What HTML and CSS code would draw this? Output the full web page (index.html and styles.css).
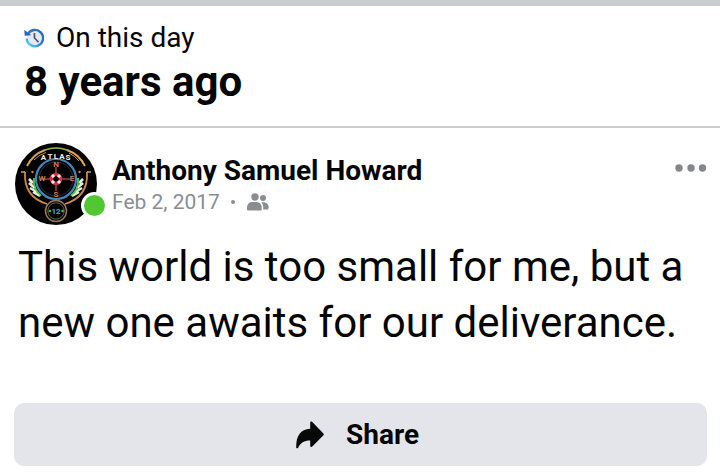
FILE: index.html
```html
<!DOCTYPE html>
<html lang="en">
<head>
<meta charset="utf-8">
<meta name="viewport" content="width=device-width, initial-scale=1">
<title>On this day</title>
<link rel="stylesheet" href="styles.css">
</head>
<body>
<main class="memory">
  <header class="memory-head">
    <p class="memory-label">
      <svg class="clock" viewBox="0 0 22 22" aria-hidden="true">
        <defs>
          <linearGradient id="ring" x1="1" y1="0" x2="0" y2="1">
            <stop offset="0" stop-color="#2b62b8"/>
            <stop offset=".5" stop-color="#2b7fcb"/>
            <stop offset="1" stop-color="#5fd6fa"/>
          </linearGradient>
        </defs>
        <circle cx="12" cy="11" r="9" fill="#e3e9f6"/>
        <path d="M4 7A9 9 0 1 1 3 11.500" fill="none" stroke="url(#ring)" stroke-width="2.600"/>
        <path d="M.3 2L.8 8.600L8 8Z" fill="#2468bd"/>
        <path d="M11.500 5.500V11L16 15.500" fill="none" stroke="#56585f" stroke-width="1.900"/>
      </svg>
      <span>On this day</span>
    </p>
    <h1 class="memory-title">8 years ago</h1>
  </header>
  <article class="post">
    <header class="post-head">
      <div class="avatar">
        <svg class="avatar-art" viewBox="0 0 82 82" role="img" aria-label="Atlas emblem">
          <circle cx="41" cy="41" r="41" fill="#020203"/>
          <g fill="none">
            <path d="M12 23A32 32 0 0 1 30 7" stroke="#d9a441" stroke-width="2"/>
            <path d="M30 7A32 32 0 0 1 52 7" stroke="#8fb85a" stroke-width="1.500"/>
            <path d="M52 7A32 32 0 0 1 70 23" stroke="#dfa650" stroke-width="2"/>
            <path d="M19 17A29 29 0 0 1 31 9.500M54 10A29 29 0 0 1 64 18" stroke="#b8963e"/>
            <path d="M6 29H10M72 29H76" stroke="#d7a463" stroke-width="1.500"/>
            <path d="M10 29C9 45 16 56 32 61M72 29C73 45 66 56 50 61" stroke="#c98a4c" stroke-width="1.800"/>
            <circle cx="41" cy="36" r="20" stroke="#4585b8" stroke-width="2.200"/>
            <circle cx="41" cy="36" r="17" stroke="#263e59" stroke-width=".8"/>
            <path d="M41 24V31M41 41V48M27 36H36M46 36H55" stroke="#a33c3e" stroke-width="1.600"/>
            <circle cx="41" cy="36" r="4.500" stroke="#cf3444" stroke-width="3.500"/>
            <path d="M37 32L39 34M45 32L43 34M37 40L39 38M45 40L43 38" stroke="#fbeeee" stroke-width="3"/>
            <circle cx="41" cy="68" r="10.500" stroke="#9a7c58" stroke-width="1.500"/>
            <circle cx="41" cy="68" r="8.200" stroke="#6c6250"/>
            <path d="M14 36L18 40M14 40L20 45M15 45L22 49M18 49L25 53" stroke="#e5f2df" stroke-width="2.500"/>
            <path d="M68 36L64 40M68 40L62 45M67 45L60 49M64 49L57 53" stroke="#e5f2df" stroke-width="2.500"/>
            <path d="M19 35V41L21 47L26 53" stroke="#58c842" stroke-width="1.800"/>
            <path d="M63 35V41L61 47L56 53" stroke="#58c842" stroke-width="1.800"/>
          </g>
          <circle cx="17.500" cy="29" r="1.200" fill="#d77c49"/>
          <circle cx="64.500" cy="29" r="1.200" fill="#d77c49"/>
          <circle cx="35" cy="68" r="1.300" fill="#4bb84a"/>
          <circle cx="47.500" cy="68" r="1.300" fill="#4bb84a"/>
          <g class="emblem-text" text-anchor="middle">
            <g fill="#f5f1e8">
              <text x="28.500" y="17">A</text>
              <text x="35" y="16">T</text>
              <text x="41" y="16">L</text>
              <text x="47" y="16">A</text>
              <text x="53" y="17">S</text>
            </g>
            <g fill="#cb7b4d">
              <text x="41" y="24">N</text>
              <text x="41" y="54">S</text>
              <text x="27" y="38">W</text>
              <text x="57" y="38">E</text>
            </g>
            <text x="41" y="71" fill="#4fa3e6">12</text>
          </g>
        </svg>
        <span class="online" title="Online"></span>
      </div>
      <div class="byline">
        <h2 class="author">Anthony Samuel Howard</h2>
        <p class="meta">
          <time datetime="2017-02-02">Feb 2, 2017</time>
          <span class="dot"></span>
          <svg class="friends" viewBox="0 0 22 18" role="img" aria-label="Friends">
            <g fill="#8a8d91">
              <circle cx="8" cy="4" r="3.700"/>
              <path d="M1 17.500C.3 17.500 0 17 0 16.200V14.500C0 11 2.500 9 5.500 9H9C12.500 9 14.700 11.200 14.700 14.500V16.200C14.700 17 14.300 17.500 13.600 17.500Z"/>
              <circle cx="16" cy="5" r="3"/>
              <path d="M14.300 9.200H16.500C19.500 9.200 21.700 11.400 21.700 14.200C21.700 15.800 21 16.500 19.500 16.500H16.200C16.500 13.400 16 11 14.300 9.200Z"/>
            </g>
          </svg>
        </p>
      </div>
      <button class="more" type="button" aria-label="More options">
        <svg class="more-dots" viewBox="0 0 32 8" aria-hidden="true">
          <g fill="#85878b"><circle cx="4" cy="4" r="3.700"/><circle cx="16" cy="4" r="3.700"/><circle cx="27.500" cy="4" r="3.700"/></g>
        </svg>
      </button>
    </header>
    <p class="post-text">This world is too small for me, but a new one awaits for our deliverance.</p>
    <button class="share" type="button">
      <svg class="share-arrow" viewBox="0 0 28 28" aria-hidden="true">
        <path d="M14.200 1.800C14.200.5 15.400.1 16.300 1L27.200 12.200C28 13 28 13.700 27.200 14.500L16.300 25.600C15.400 26.500 14.200 26 14.200 24.800V19.400C8 19.400 4.500 21.500 2.300 26.500C1.700 27.800.2 27.600.2 26.200C.1 15 4.500 8.300 14.200 7.800Z" fill="#080809"/>
      </svg>
      <span>Share</span>
    </button>
  </article>
</main>
</body>
</html>
```
FILE: styles.css
```css
* {
  box-sizing: border-box;
}

body {
  margin: 0;
  background: #fff;
  color: #050505;
  font-family: Roboto, "Liberation Sans", sans-serif;
}

h1, h2, p {
  margin: 0;
}

button {
  border: 0;
  font: inherit;
  color: inherit;
  cursor: pointer;
}

svg {
  display: block;
  flex: none;
}

.memory {
  border-top: 6px solid #c9ccd1;
}

.memory-head {
  padding: 16px 24px;
  border-bottom: 2px solid #c9cbce;
}

.memory-label {
  display: flex;
  align-items: center;
  gap: 12px;
  font-size: 28px;
  line-height: 32px;
}

.clock {
  width: 20px;
  height: 20px;
}

.memory-title {
  font-size: 42px;
  font-weight: 700;
  line-height: 56px;
}

.post {
  padding: 15px 13px 10px 14px;
}

.post-head {
  display: flex;
  align-items: flex-start;
}

.avatar {
  position: relative;
  flex: none;
  width: 84px;
}

.avatar-art {
  width: 82px;
  height: 82px;
  margin-left: 1px;
}

.emblem-text {
  font-size: 8px;
  font-weight: 700;
}

.online {
  position: absolute;
  right: -10px;
  bottom: 6px;
  width: 27px;
  height: 27px;
  border: 3px solid #fff;
  border-radius: 50%;
  background: #51c832;
}

.byline {
  flex: 1;
  padding: 12px 0 0 14px;
}

.author {
  font-size: 28px;
  font-weight: 700;
  line-height: 32px;
}

.meta {
  display: flex;
  align-items: center;
  color: #8a8d91;
  font-size: 21px;
  line-height: 30px;
}

.dot {
  width: 4px;
  height: 4px;
  margin: 0 12px 0 11px;
  border-radius: 50%;
  background: #8a8d91;
}

.friends {
  width: 22px;
  height: 18px;
}

.more {
  padding: 21px 0;
  background: none;
}

.more-dots {
  width: 32px;
  height: 8px;
}

.post-text {
  padding: 14px 4px 0;
  font-size: 42px;
  line-height: 56px;
}

.share {
  display: flex;
  align-items: center;
  justify-content: center;
  gap: 22px;
  width: 100%;
  height: 63px;
  margin-top: 52px;
  padding: 0 6px 0 0;
  border-radius: 10px;
  background: #e4e5ea;
  font-size: 28px;
  font-weight: 700;
}

.share-arrow {
  width: 28px;
  height: 28px;
}
```
